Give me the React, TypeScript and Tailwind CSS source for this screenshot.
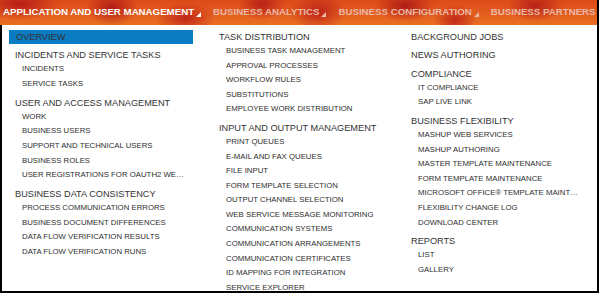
import React from "react";

type Entry = { label: string; kind: "head" | "item" | "selected" };

const h = (label: string): Entry => ({ label, kind: "head" });
const i = (label: string): Entry => ({ label, kind: "item" });

const columns: Entry[][] = [
  [
    { label: "OVERVIEW", kind: "selected" },
    h("INCIDENTS AND SERVICE TASKS"),
    i("INCIDENTS"),
    i("SERVICE TASKS"),
    h("USER AND ACCESS MANAGEMENT"),
    i("WORK"),
    i("BUSINESS USERS"),
    i("SUPPORT AND TECHNICAL USERS"),
    i("BUSINESS ROLES"),
    i("USER REGISTRATIONS FOR OAUTH2 WEB APPLICATIONS"),
    h("BUSINESS DATA CONSISTENCY"),
    i("PROCESS COMMUNICATION ERRORS"),
    i("BUSINESS DOCUMENT DIFFERENCES"),
    i("DATA FLOW VERIFICATION RESULTS"),
    i("DATA FLOW VERIFICATION RUNS"),
  ],
  [
    h("TASK DISTRIBUTION"),
    i("BUSINESS TASK MANAGEMENT"),
    i("APPROVAL PROCESSES"),
    i("WORKFLOW RULES"),
    i("SUBSTITUTIONS"),
    i("EMPLOYEE WORK DISTRIBUTION"),
    h("INPUT AND OUTPUT MANAGEMENT"),
    i("PRINT QUEUES"),
    i("E-MAIL AND FAX QUEUES"),
    i("FILE INPUT"),
    i("FORM TEMPLATE SELECTION"),
    i("OUTPUT CHANNEL SELECTION"),
    i("WEB SERVICE MESSAGE MONITORING"),
    i("COMMUNICATION SYSTEMS"),
    i("COMMUNICATION ARRANGEMENTS"),
    i("COMMUNICATION CERTIFICATES"),
    i("ID MAPPING FOR INTEGRATION"),
    i("SERVICE EXPLORER"),
  ],
  [
    h("BACKGROUND JOBS"),
    h("NEWS AUTHORING"),
    h("COMPLIANCE"),
    i("IT COMPLIANCE"),
    i("SAP LIVE LINK"),
    h("BUSINESS FLEXIBILITY"),
    i("MASHUP WEB SERVICES"),
    i("MASHUP AUTHORING"),
    i("MASTER TEMPLATE MAINTENANCE"),
    i("FORM TEMPLATE MAINTENANCE"),
    i("MICROSOFT OFFICE® TEMPLATE MAINTENANCE"),
    i("FLEXIBILITY CHANGE LOG"),
    i("DOWNLOAD CENTER"),
    h("REPORTS"),
    i("LIST"),
    i("GALLERY"),
  ],
];

const tabs = [
  "APPLICATION AND USER MANAGEMENT",
  "BUSINESS ANALYTICS",
  "BUSINESS CONFIGURATION",
  "BUSINESS PARTNERS",
];

const Caret = ({ active }: { active: boolean }) => (
  <svg width="5" height="5" viewBox="0 0 5 5" className="ml-[2px] mt-[4px] shrink-0">
    <polygon points="5,0 5,5 0,5" fill={active ? "#ffffff" : "#ebb8a6"} />
  </svg>
);

const Row = ({ entry, first }: { entry: Entry; first: boolean }) => {
  if (entry.kind === "selected") {
    return (
      <div className="w-[184px] h-[14px] shrink-0 pl-[7px] flex items-center bg-[#0b7bc2] text-[9.2px] leading-[14px] text-[#333]">
        {entry.label}
      </div>
    );
  }
  if (entry.kind === "head") {
    return (
      <div
        className={
          first
            ? "w-full h-[14px] shrink-0 pl-[6px] text-[9.2px] leading-[14px] text-[#333] whitespace-nowrap"
            : "w-full h-[14px] shrink-0 mt-[4.4px] pl-[6px] text-[9.2px] leading-[14px] text-[#333] whitespace-nowrap"
        }
      >
        {entry.label}
      </div>
    );
  }
  return (
    <div className="w-full h-[14.55px] shrink-0 pl-[13px] pr-[4px] leading-[14.55px] text-[7.8px] text-[#2e2e2e] truncate">
      {entry.label}
    </div>
  );
};

export default function App() {
  return (
    <div className="w-[599px] h-[293px] border-r-2 border-black bg-white flex flex-col overflow-hidden font-['Liberation_Sans',Arial,sans-serif]">
      <div className="h-[25px] shrink-0 flex items-center pl-[3px] whitespace-nowrap overflow-hidden bg-[radial-gradient(ellipse_40px_16px_at_20px_4px,#b81e16,transparent),radial-gradient(ellipse_26px_18px_at_112px_8px,#b01c16,transparent),radial-gradient(ellipse_30px_16px_at_185px_18px,#c02618,transparent),radial-gradient(ellipse_24px_16px_at_262px_4px,#b82218,transparent),radial-gradient(ellipse_28px_18px_at_318px_12px,#bc2418,transparent),radial-gradient(ellipse_30px_16px_at_405px_6px,#b01c16,transparent),radial-gradient(ellipse_22px_16px_at_455px_20px,#c02818,transparent),radial-gradient(ellipse_28px_16px_at_535px_6px,#b82218,transparent),linear-gradient(180deg,#dc4a1a,#e96f22)]">
        {tabs.map((t, idx) => (
          <div key={t} className="flex items-center mr-[12px]">
            <span
              className={
                idx === 0
                  ? "text-[9.7px] font-bold text-white"
                  : "text-[9.7px] font-bold text-[#ebb8a6]"
              }
            >
              {t}
            </span>
            <Caret active={idx === 0} />
          </div>
        ))}
      </div>
      <div className="flex-1 border-l-2 border-b-2 border-black pl-[7px] pt-[5px] flex overflow-hidden">
        <div className="w-[204px] shrink-0">
          <div className="w-[184px] flex flex-col">
            {columns[0].map((e, n) => (
              <Row key={e.label} entry={e} first={n === 0} />
            ))}
          </div>
        </div>
        <div className="w-[192px] shrink-0">
          <div className="w-[184px] flex flex-col">
            {columns[1].map((e, n) => (
              <Row key={e.label} entry={e} first={n === 0} />
            ))}
          </div>
        </div>
        <div className="flex-1">
          <div className="w-[178px] flex flex-col">
            {columns[2].map((e, n) => (
              <Row key={e.label} entry={e} first={n === 0} />
            ))}
          </div>
        </div>
      </div>
    </div>
  );
}
